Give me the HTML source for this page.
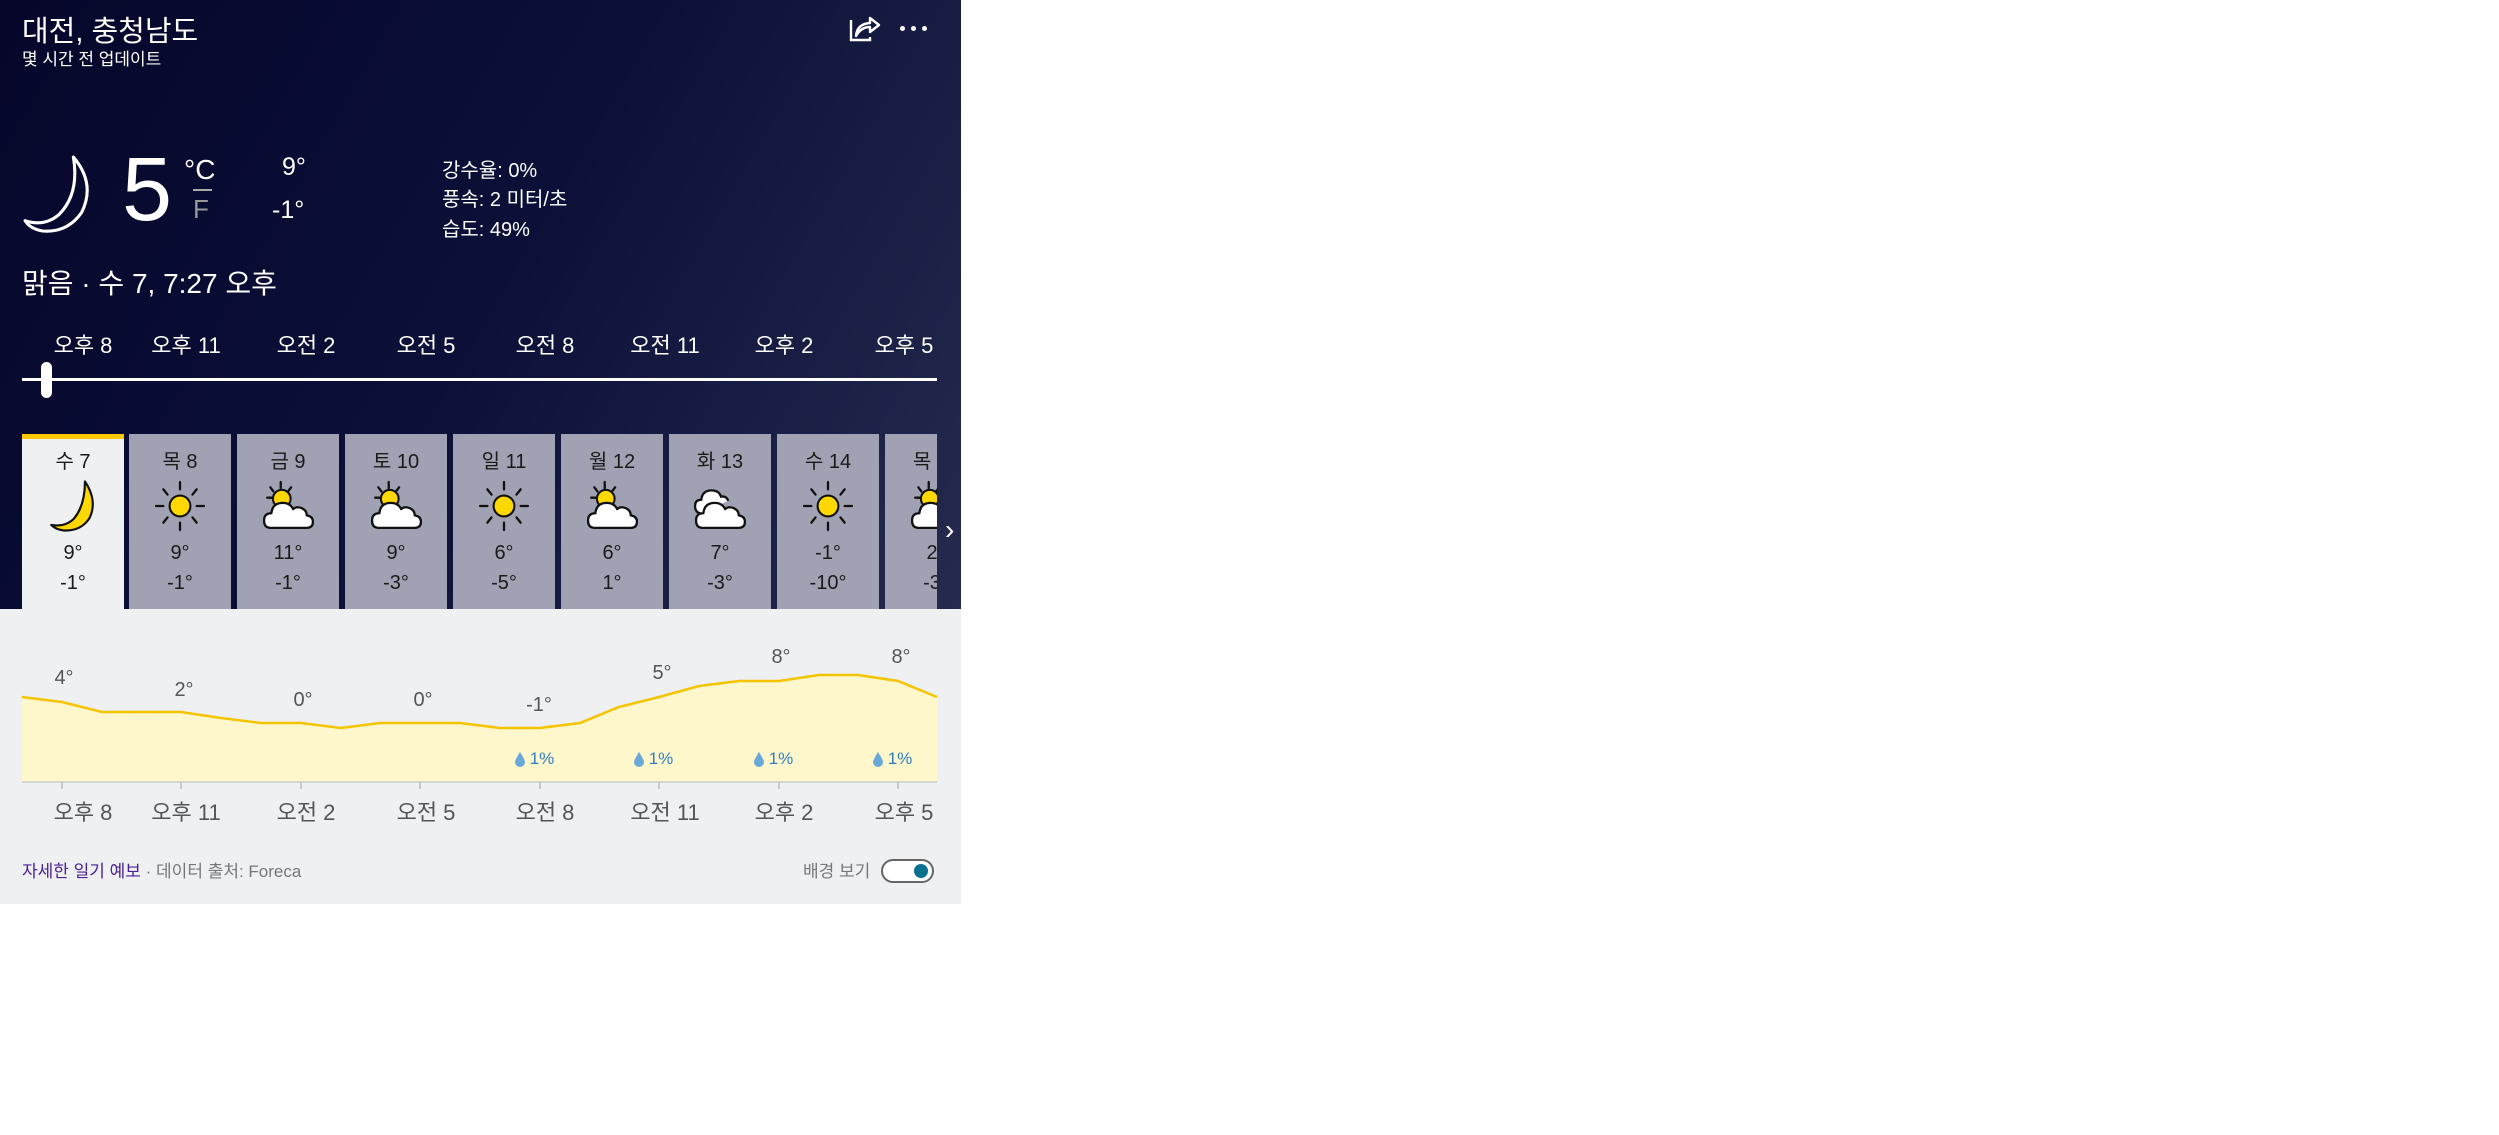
<!DOCTYPE html>
<html><head><meta charset="utf-8">
<style>
*{margin:0;padding:0;box-sizing:border-box}
body{width:2499px;height:1135px;background:#fff;position:relative;overflow:hidden;font-family:"Liberation Sans","Noto Sans CJK KR",sans-serif}
.a{position:absolute;white-space:nowrap}
#dark{position:absolute;left:0;top:0;width:961px;height:609px;background:linear-gradient(120deg,#05062a 0%,#0c1038 50%,#252a4e 100%)}
#light{position:absolute;left:0;top:609px;width:961px;height:295px;background:#eef0f2}
.w{color:#fff}
.card{position:absolute;top:434px;width:102px;height:175px;background:#a0a1b3;text-align:center;color:#1a1a1a;font-size:20px}
.card .d{position:absolute;top:11px;width:100%}
.card .h{position:absolute;top:108px;width:100%}
.card .l{position:absolute;top:138px;width:100%}
.card svg{position:absolute;left:25px;top:46px}
.hl{position:absolute;top:328px;color:#fff;font-size:22px;transform:translateX(-50%)}
.xl{position:absolute;top:795px;color:#555;font-size:22px;transform:translateX(-50%)}
.tl{position:absolute;color:#555;font-size:20px;transform:translateX(-50%)}
.rn{position:absolute;top:749px;color:#2f7fc0;font-size:17px;transform:translateX(-50%)}
</style></head><body>
<svg width="0" height="0" style="position:absolute">
<defs>
<symbol id="sun" viewBox="0 0 50 50">
<g stroke="#111" stroke-width="2.2" stroke-linecap="round">
<line x1="25" y1="2" x2="25" y2="9"/><line x1="25" y1="41" x2="25" y2="48"/>
<line x1="2" y1="25" x2="9" y2="25"/><line x1="41" y1="25" x2="48" y2="25"/>
<line x1="9" y1="9" x2="13" y2="14"/><line x1="41" y1="9" x2="37" y2="14"/>
<line x1="9" y1="41" x2="13" y2="36"/><line x1="41" y1="41" x2="37" y2="36"/>
</g>
<circle cx="25" cy="25" r="10" fill="#ffd800" stroke="#111" stroke-width="2"/>
</symbol>
<symbol id="pc" viewBox="0 0 50 50">
<g stroke="#111" stroke-width="2.2" stroke-linecap="round">
<line x1="18" y1="2" x2="18" y2="8"/><line x1="5" y1="17" x2="10" y2="17"/>
<line x1="8" y1="7" x2="11" y2="11"/><line x1="28" y1="7" x2="25" y2="11"/>
</g>
<circle cx="19" cy="18" r="8.5" fill="#ffd800" stroke="#111" stroke-width="2"/>
<path d="M8 46 Q2 46 2 39 Q2 32 9 32 Q10 22 20 22 Q27 22 30 28 Q33 25 38 27 Q43 29 43 34 Q49 35 49 40 Q49 46 43 46 Z" fill="#fff" stroke="#111" stroke-width="2.2" stroke-linejoin="round"/>
</symbol>
<symbol id="cl" viewBox="0 0 50 50">
<path d="M6 32 Q1 31 1 25 Q1 19 7 19 Q8 10 17 10 Q24 10 26 16 Q31 15 33 20" fill="#fff" stroke="#111" stroke-width="2.2"/>
<path d="M8 46 Q2 46 2 39 Q2 32 9 32 Q10 22 20 22 Q27 22 30 28 Q33 25 38 27 Q43 29 43 34 Q49 35 49 40 Q49 46 43 46 Z" fill="#fff" stroke="#111" stroke-width="2.2" stroke-linejoin="round"/>
</symbol>
</defs>
</svg>
<div id="dark"></div>
<div id="light"></div>

<div class="a w" style="left:22px;top:8px;font-size:29px">대전, 충청남도</div>
<div class="a w" style="left:22px;top:45px;font-size:17px">몇 시간 전 업데이트</div>
<svg class="a" style="left:848px;top:12px" width="34" height="30" viewBox="0 0 34 30"><path d="M3 8 V28 H22 V25" fill="none" stroke="#fff" stroke-width="2.4"/><path d="M8 24 Q9 12 22 11 V6 L31 13 L22 20 V15 Q13 15 8 24 Z" fill="none" stroke="#fff" stroke-width="2.4" stroke-linejoin="round"/></svg>
<div class="a" style="left:900px;top:26px"><span style="position:absolute;left:0;width:5px;height:5px;border-radius:50%;background:#fff"></span><span style="position:absolute;left:11px;width:5px;height:5px;border-radius:50%;background:#fff"></span><span style="position:absolute;left:22px;width:5px;height:5px;border-radius:50%;background:#fff"></span></div>

<svg class="a" style="left:22px;top:152px" width="74" height="84" viewBox="0 0 72 80"><path d="M50 4 Q72 30 58 58 Q44 78 20 76 Q8 74 3 66 Q22 72 36 60 Q56 40 50 4 Z" fill="none" stroke="#fff" stroke-width="3" stroke-linejoin="round"/></svg>
<div class="a w" style="left:122px;top:138px;font-size:90px;line-height:104px">5</div>
<div class="a w" style="left:184px;top:154px;font-size:28px">°C</div>
<div class="a" style="left:193px;top:189px;width:19px;height:2px;background:#aaa"></div>
<div class="a" style="left:193px;top:194px;font-size:26px;color:#999">F</div>
<div class="a w" style="left:282px;top:153px;font-size:25px">9°</div>
<div class="a w" style="left:272px;top:196px;font-size:25px">-1°</div>
<div class="a w" style="left:442px;top:154px;font-size:20px">강수율: 0%</div>
<div class="a w" style="left:442px;top:183px;font-size:20px">풍속: 2 미터/초</div>
<div class="a w" style="left:442px;top:213px;font-size:20px">습도: 49%</div>
<div class="a w" style="left:22px;top:262px;font-size:28px">맑음 · 수 7, 7:27 오후</div>

<div class="hl" style="left:83px">오후 8</div><div class="hl" style="left:186px">오후 11</div><div class="hl" style="left:306px">오전 2</div><div class="hl" style="left:426px">오전 5</div><div class="hl" style="left:545px">오전 8</div><div class="hl" style="left:665px">오전 11</div><div class="hl" style="left:784px">오후 2</div><div class="hl" style="left:904px">오후 5</div>
<div class="a" style="left:22px;top:378px;width:915px;height:3px;background:#fff"></div>
<div class="a" style="left:41px;top:362px;width:11px;height:36px;border-radius:6px;background:#fff"></div>

<div class="card" style="left:22px;background:#eff0f2;border-top:5px solid #ffc800"><div class="d" style="top:6px">수 7</div>
<svg style="left:26px;top:40px" width="50" height="55" viewBox="0 0 46 50"><path d="M34 2 Q46 20 38 36 Q30 48 14 47 Q7 46 3 42 Q16 44 24 36 Q34 24 34 2 Z" fill="#ffd800" stroke="#111" stroke-width="2" stroke-linejoin="round"/></svg>
<div class="h" style="top:103px">9°</div><div class="l" style="top:133px">-1°</div></div>
<div class="card" style="left:129px"><div class="d">목 8</div><svg width="52" height="52"><use href="#sun"/></svg><div class="h">9°</div><div class="l">-1°</div></div>
<div class="card" style="left:237px"><div class="d">금 9</div><svg width="52" height="52"><use href="#pc"/></svg><div class="h">11°</div><div class="l">-1°</div></div>
<div class="card" style="left:345px"><div class="d">토 10</div><svg width="52" height="52"><use href="#pc"/></svg><div class="h">9°</div><div class="l">-3°</div></div>
<div class="card" style="left:453px"><div class="d">일 11</div><svg width="52" height="52"><use href="#sun"/></svg><div class="h">6°</div><div class="l">-5°</div></div>
<div class="card" style="left:561px"><div class="d">월 12</div><svg width="52" height="52"><use href="#pc"/></svg><div class="h">6°</div><div class="l">1°</div></div>
<div class="card" style="left:669px"><div class="d">화 13</div><svg width="52" height="52"><use href="#cl"/></svg><div class="h">7°</div><div class="l">-3°</div></div>
<div class="card" style="left:777px"><div class="d">수 14</div><svg width="52" height="52"><use href="#sun"/></svg><div class="h">-1°</div><div class="l">-10°</div></div>
<div style="position:absolute;left:885px;top:434px;width:52px;height:175px;overflow:hidden"><div class="card" style="left:0;top:0"><div class="d">목 15</div><svg width="52" height="52"><use href="#pc"/></svg><div class="h">2°</div><div class="l">-3°</div></div></div>
<div class="a w" style="left:945px;top:514px;font-size:28px">›</div>

<svg class="a" style="left:0;top:609px" width="961" height="200" viewBox="0 609 961 200">
<path d="M22 697 L62 702 L102 712 L181 712 L221 718 L261 723 L301 723 L341 728 L380 723 L460 723 L500 728 L540 728 L580 723 L619 707 L659 697 L699 686 L739 681 L779 681 L819 675 L858 675 L898 681 L937 697 L937 782 L22 782 Z" fill="#fdf7cb"/>
<path d="M22 697 L62 702 L102 712 L181 712 L221 718 L261 723 L301 723 L341 728 L380 723 L460 723 L500 728 L540 728 L580 723 L619 707 L659 697 L699 686 L739 681 L779 681 L819 675 L858 675 L898 681 L937 697" fill="none" stroke="#f5c400" stroke-width="2.5"/>
<line x1="22" y1="782" x2="937" y2="782" stroke="#ccc" stroke-width="1.5"/>
<g stroke="#bbb" stroke-width="1.5"><line x1="62" y1="782" x2="62" y2="789"/><line x1="181" y1="782" x2="181" y2="789"/><line x1="301" y1="782" x2="301" y2="789"/><line x1="420" y1="782" x2="420" y2="789"/><line x1="540" y1="782" x2="540" y2="789"/><line x1="659" y1="782" x2="659" y2="789"/><line x1="779" y1="782" x2="779" y2="789"/><line x1="898" y1="782" x2="898" y2="789"/></g>
<g fill="#6aa8d8"><path d="M520 752 Q515 760 515 762 A5 5 0 0 0 525 762 Q525 760 520 752Z"/><path d="M639 752 Q634 760 634 762 A5 5 0 0 0 644 762 Q644 760 639 752Z"/><path d="M759 752 Q754 760 754 762 A5 5 0 0 0 764 762 Q764 760 759 752Z"/><path d="M878 752 Q873 760 873 762 A5 5 0 0 0 883 762 Q883 760 878 752Z"/></g>
</svg>
<div class="tl" style="left:64px;top:667px">4°</div><div class="tl" style="left:184px;top:679px">2°</div><div class="tl" style="left:303px;top:689px">0°</div><div class="tl" style="left:423px;top:689px">0°</div><div class="tl" style="left:539px;top:694px">-1°</div><div class="tl" style="left:662px;top:662px">5°</div><div class="tl" style="left:781px;top:646px">8°</div><div class="tl" style="left:901px;top:646px">8°</div>
<div class="rn" style="left:542px">1%</div><div class="rn" style="left:661px">1%</div><div class="rn" style="left:781px">1%</div><div class="rn" style="left:900px">1%</div>
<div class="xl" style="left:83px">오후 8</div><div class="xl" style="left:186px">오후 11</div><div class="xl" style="left:306px">오전 2</div><div class="xl" style="left:426px">오전 5</div><div class="xl" style="left:545px">오전 8</div><div class="xl" style="left:665px">오전 11</div><div class="xl" style="left:784px">오후 2</div><div class="xl" style="left:904px">오후 5</div>

<div class="a" style="left:22px;top:857px;font-size:17px;color:#777"><span style="color:#4b2196">자세한 일기 예보</span> · 데이터 출처: Foreca</div>
<div class="a" style="left:803px;top:857px;font-size:17px;color:#777">배경 보기</div>
<div class="a" style="left:881px;top:859px;width:53px;height:24px;border:2px solid #666;border-radius:12px;background:#fff"><div style="position:absolute;right:4px;top:3px;width:14px;height:14px;border-radius:50%;background:#0a7090"></div></div>
</body></html>
